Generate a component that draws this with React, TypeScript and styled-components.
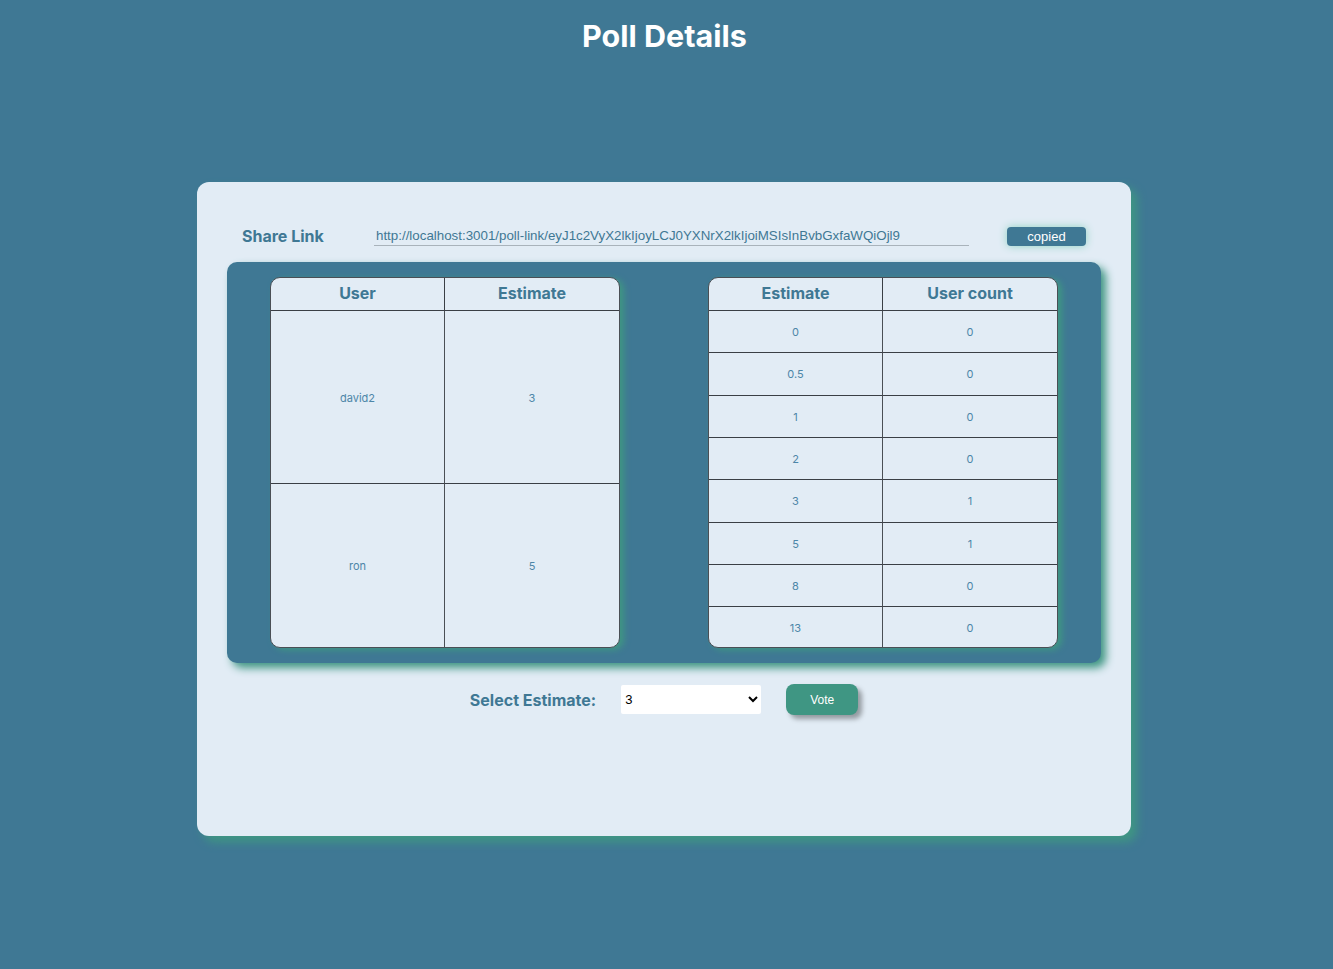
import React from "react";
import styled, { createGlobalStyle } from "styled-components";

const Global = createGlobalStyle`
  html, body { margin: 0; padding: 0; }
  body {
    background: #3f7894;
    font-family: Inter, "Noto Sans", sans-serif;
    min-height: 969px;
  }
`;

const Page = styled.div`
  display: flex;
  flex-direction: column;
  align-items: center;
`;

const Title = styled.h1`
  margin: 14px 0 0 -4px;
  font-size: 30.5px;
  line-height: 44px;
  font-weight: 700;
  color: #ffffff;
`;

const Card = styled.section`
  margin-top: 124px;
  margin-left: -5px;
  width: 934px;
  height: 654px;
  box-sizing: border-box;
  background: #e2ecf5;
  border-radius: 12px;
  box-shadow: 6px 6px 10px #3f9683;
  padding: 37px 30px 0;
  display: flex;
  flex-direction: column;
`;

const ShareRow = styled.div`
  display: flex;
  align-items: center;
  height: 34px;
  padding-left: 15px;
`;

const ShareLabel = styled.span`
  width: 132px;
  font-size: 16px;
  font-weight: 700;
  color: #3f7894;
`;

const LinkInput = styled.input`
  width: 595px;
  box-sizing: border-box;
  border: none;
  border-bottom: 1px solid #a9b3bb;
  background: transparent;
  padding: 2px;
  font-family: "Liberation Sans", Arial, sans-serif;
  font-size: 13.333px;
  color: #3f7894;
  outline: none;
`;

const CopiedButton = styled.button`
  margin-left: 38px;
  width: 79px;
  height: 19px;
  border: none;
  border-radius: 4px;
  background: #3f7894;
  color: #ffffff;
  font-family: "Liberation Sans", Arial, sans-serif;
  font-size: 13px;
  padding: 0;
  box-shadow: 0 0 8px #8fd3c4;
`;

const Panel = styled.div`
  margin-top: 9px;
  height: 401px;
  box-sizing: border-box;
  background: #3f7894;
  border-radius: 10px;
  box-shadow: 5px 5px 8px #3f9683;
  padding: 15px 43px;
  display: flex;
  justify-content: space-between;
`;

const Table = styled.table`
  width: 350px;
  height: 371px;
  border-collapse: separate;
  border-spacing: 0;
  background: #e2ecf5;
  border: 1px solid #4a4f55;
  border-radius: 10px;
  box-shadow: 4px 2px 6px #3f9683;
  overflow: hidden;
  table-layout: fixed;
`;

const Th = styled.th`
  height: 29px;
  padding: 0 0 3px;
  font-size: 16px;
  font-weight: 700;
  color: #3f7894;
  border-bottom: 1px solid #3a3f45;
  border-right: 1px solid #3a3f45;
  &:last-child { border-right: none; }
`;

const Td = styled.td`
  padding: 1px 0 0;
  text-align: center;
  font-size: 11px;
  color: #4d86a8;
  border-right: 1px solid #4a4f55;
  border-bottom: 1px solid #3a3f45;
  &:last-child { border-right: none; }
  tr:last-child > & { border-bottom: none; }
`;

const VoteRow = styled.div`
  margin-top: 21px;
  display: flex;
  align-items: center;
  justify-content: center;
  gap: 25px;
`;

const VoteLabel = styled.label`
  font-size: 16px;
  font-weight: 700;
  color: #3f7894;
`;

const Select = styled.select`
  width: 140px;
  height: 29px;
  border: none;
  border-radius: 2px;
  background: #ffffff;
  font-family: "Liberation Sans", Arial, sans-serif;
  font-size: 13px;
  color: #000;
  padding: 0;
`;

const VoteButton = styled.button`
  width: 72px;
  height: 31px;
  border: none;
  border-radius: 8px;
  background: #3f9683;
  color: #ffffff;
  font-family: "Liberation Sans", Arial, sans-serif;
  font-size: 12px;
  box-shadow: 4px 4px 5px rgba(0, 0, 0, 0.35);
`;

const votes = [
  { user: "david2", estimate: "3" },
  { user: "ron", estimate: "5" },
];

const counts = [
  ["0", "0"],
  ["0.5", "0"],
  ["1", "0"],
  ["2", "0"],
  ["3", "1"],
  ["5", "1"],
  ["8", "0"],
  ["13", "0"],
];

export default function App() {
  return (
    <Page>
      <Global />
      <Title>Poll Details</Title>
      <Card>
        <ShareRow>
          <ShareLabel>Share Link</ShareLabel>
          <LinkInput
            readOnly
            value="http://localhost:3001/poll-link/eyJ1c2VyX2lkIjoyLCJ0YXNrX2lkIjoiMSIsInBvbGxfaWQiOjl9"
          />
          <CopiedButton>copied</CopiedButton>
        </ShareRow>
        <Panel>
          <Table>
            <thead>
              <tr>
                <Th>User</Th>
                <Th>Estimate</Th>
              </tr>
            </thead>
            <tbody>
              {votes.map((v) => (
                <tr key={v.user}>
                  <Td>{v.user}</Td>
                  <Td>{v.estimate}</Td>
                </tr>
              ))}
            </tbody>
          </Table>
          <Table>
            <thead>
              <tr>
                <Th>Estimate</Th>
                <Th>User count</Th>
              </tr>
            </thead>
            <tbody>
              {counts.map(([e, c]) => (
                <tr key={e}>
                  <Td>{e}</Td>
                  <Td>{c}</Td>
                </tr>
              ))}
            </tbody>
          </Table>
        </Panel>
        <VoteRow>
          <VoteLabel>Select Estimate:</VoteLabel>
          <Select defaultValue="3">
            {counts.map(([e]) => (
              <option key={e} value={e}>
                {e}
              </option>
            ))}
          </Select>
          <VoteButton>Vote</VoteButton>
        </VoteRow>
      </Card>
    </Page>
  );
}
